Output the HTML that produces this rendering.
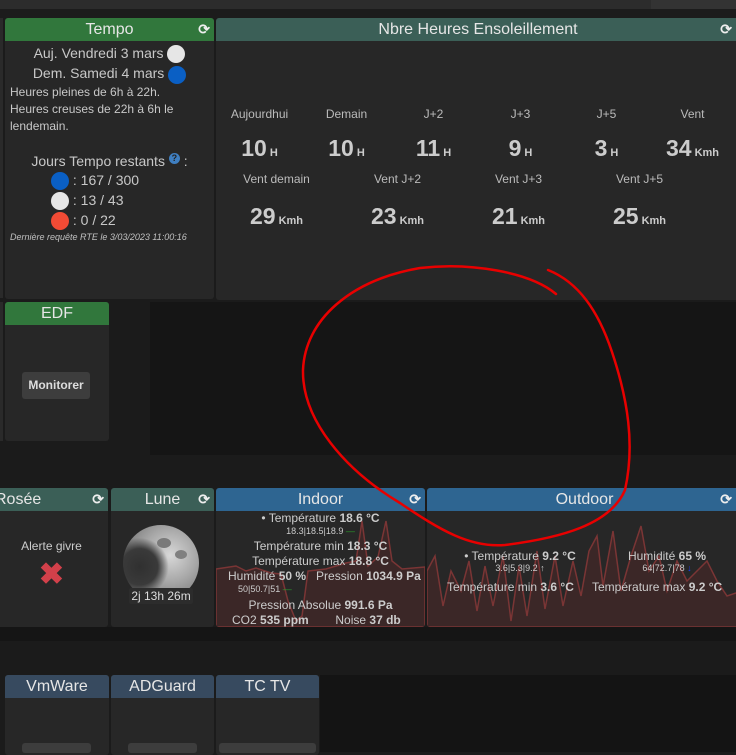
<!DOCTYPE html>
<html><head><meta charset="utf-8">
<style>
*{box-sizing:border-box;margin:0;padding:0}
body{width:736px;height:752px;overflow:hidden;background:#1b1b1b;font-family:"Liberation Sans",sans-serif;color:#ccc;position:relative}
.abs{position:absolute}
.card{position:absolute;background:#272727;border-radius:3px;overflow:hidden}
.hd{height:23px;line-height:23px;text-align:center;color:#e6e6e6;font-size:16px;position:relative}
.green{background:#31773c}
.teal{background:#3b5f57}
.blue{background:#2e6591}
.slate{background:#374a5f}
.ref{position:absolute;right:4px;top:0;font-size:14px;color:#eee;font-weight:bold}
.c{text-align:center}
.dot{display:inline-block;width:18px;height:18px;border-radius:50%;vertical-align:middle}
.lbl{font-size:12px;color:#bbb;text-align:center}
.big{font-size:23px;font-weight:bold;color:#ccc;text-align:center}
.big small{font-size:11px;font-weight:bold;margin-left:3px}
</style></head><body>
<div class="abs" style="left:0;top:0;width:651px;height:9px;background:#2c2c2c"></div>
<div class="abs" style="left:651px;top:0;width:85px;height:9px;background:#333"></div>
<div class="abs" style="left:0;top:9px;width:736px;height:9px;background:#1c1c1c"></div>
<div class="abs" style="left:0;top:18px;width:3px;height:280px;background:#2a2a2a"></div>

<!-- Tempo -->
<div class="card" style="left:5px;top:18px;width:209px;height:281px">
 <div class="hd green">Tempo<span class="ref">⟳</span></div>
 <div class="c" style="font-size:14px;margin-top:2px;line-height:20px;color:#c8c8c8">Auj. Vendredi 3 mars <span class="dot" style="background:#e6e6e6"></span><br>Dem. Samedi 4 mars <span class="dot" style="background:#0a5fc4"></span></div>
 <div style="font-size:12px;line-height:17px;padding-left:5px;color:#c8c8c8">Heures pleines de 6h à 22h.<br>Heures creuses de 22h à 6h le lendemain.</div>
 <div class="c" style="font-size:14px;margin-top:18px;color:#c8c8c8">Jours Tempo restants <span style="display:inline-block;width:11px;height:11px;border-radius:50%;background:#3f7fc1;color:#222;font-size:9px;line-height:11px;vertical-align:top;font-weight:bold">?</span> :</div>
 <div style="font-size:14px;line-height:20px;padding-left:46px;color:#c8c8c8;margin-top:1px">
  <div><span class="dot" style="background:#0a5fc4"></span> : 167 / 300</div>
  <div><span class="dot" style="background:#e6e6e6"></span> : 13 / 43</div>
  <div><span class="dot" style="background:#f24b35"></span> : 0 / 22</div>
 </div>
 <div style="font-size:9px;font-style:italic;padding-left:5px;margin-top:2px;color:#c0c0c0">Dernière requête RTE le 3/03/2023 11:00:16</div>
</div>

<!-- Nbre -->
<div class="card" style="left:216px;top:18px;width:524px;height:282px">
 <div class="hd teal">Nbre Heures Ensoleillement<span class="ref" style="right:8px">⟳</span></div>
 <div class="abs" style="left:0;top:89px;width:520px">
  <div style="display:flex">
   <div style="width:87px"><div class="lbl">Aujourdhui</div><div class="big" style="margin-top:14px">10<small>H</small></div></div>
   <div style="width:87px"><div class="lbl">Demain</div><div class="big" style="margin-top:14px">10<small>H</small></div></div>
   <div style="width:87px"><div class="lbl">J+2</div><div class="big" style="margin-top:14px">11<small>H</small></div></div>
   <div style="width:87px"><div class="lbl">J+3</div><div class="big" style="margin-top:14px">9<small>H</small></div></div>
   <div style="width:85px"><div class="lbl">J+5</div><div class="big" style="margin-top:14px">3<small>H</small></div></div>
   <div style="width:87px"><div class="lbl">Vent</div><div class="big" style="margin-top:14px">34<small>Kmh</small></div></div>
  </div>
  <div style="display:flex;margin-top:10px">
   <div style="width:121px"><div class="lbl">Vent demain</div><div class="big" style="margin-top:17px">29<small>Kmh</small></div></div>
   <div style="width:121px"><div class="lbl">Vent J+2</div><div class="big" style="margin-top:17px">23<small>Kmh</small></div></div>
   <div style="width:121px"><div class="lbl">Vent J+3</div><div class="big" style="margin-top:17px">21<small>Kmh</small></div></div>
   <div style="width:121px"><div class="lbl">Vent J+5</div><div class="big" style="margin-top:17px">25<small>Kmh</small></div></div>
  </div>
 </div>
</div>

<!-- middle background -->
<div class="abs" style="left:150px;top:302px;width:586px;height:153px;background:#151515"></div>
<div class="abs" style="left:0;top:302px;width:3px;height:139px;background:#2a2a2a"></div>
<div class="card" style="left:5px;top:302px;width:104px;height:139px">
 <div class="hd green">EDF</div>
 <div class="abs" style="left:17px;top:70px;width:68px;height:27px;background:#3d3d3d;border-radius:3px;color:#ddd;font-size:12px;font-weight:bold;text-align:center;line-height:27px">Monitorer</div>
</div>

<!-- row 3 -->
<div class="abs" style="left:0;top:627px;width:736px;height:14px;background:#151515"></div>
<div class="card" style="left:-5px;top:488px;width:113px;height:139px">
 <div class="hd teal" style="text-align:left;padding-left:0">Rosée<span class="ref">⟳</span></div>
 <div class="c" style="font-size:12px;color:#ccc;margin-top:28px">Alerte givre</div>
 <div class="c" style="font-size:30px;color:#d2404a;font-weight:bold;margin-top:4px">✖</div>
</div>
<div class="card" style="left:111px;top:488px;width:103px;height:139px">
 <div class="hd teal">Lune<span class="ref">⟳</span></div>
 <div class="abs" style="left:12px;top:37px;width:76px;height:76px;border-radius:50%;background:radial-gradient(circle at 22% 55%,#303030 0%,#3a3a3a 25%,transparent 40%),radial-gradient(circle at 62% 40%,#d8d8d8 0%,#a8a8a8 40%,#8d8d8d 60%,#5a5a5a 85%,#333 100%)"></div>
 <div class="abs" style="left:46px;top:50px;width:14px;height:10px;border-radius:50%;background:#7a7a7a"></div>
 <div class="abs" style="left:64px;top:62px;width:12px;height:9px;border-radius:50%;background:#808080"></div>
 <div class="abs" style="left:18px;top:100px;width:64px;height:16px;background:#2c2c2c;color:#ddd;font-size:12px;text-align:center;line-height:16px;border-radius:2px">2j 13h 26m</div>
</div>
<div class="card" style="left:216px;top:488px;width:209px;height:139px">
 <div class="hd blue">Indoor<span class="ref">⟳</span></div>
 <svg class="abs" style="left:0;top:23px" width="209" height="116"><path d="M0 58 L20 55 L30 60 L40 57 L55 62 L65 63 L72 90 L80 110 L86 105 L92 60 L110 58 L130 52 L140 50 L146 10 L152 55 L162 46 L170 10 L176 50 L186 58 L209 56 L209 116 L0 116Z" fill="#3b2727" stroke="#7a3535" stroke-width="1.5"/></svg>
 <div class="abs" style="left:0;top:23px;width:209px;font-size:12px;color:#ccc;line-height:15px">
  <div class="c">• Température <b>18.6 °C</b></div>
  <div class="c" style="font-size:9px;line-height:11px">18.3|18.5|18.9 <span style="color:#2a9a2a">—</span></div>
  <div class="c" style="margin-top:2px">Température min <b>18.3 °C</b></div>
  <div class="c">Température max <b>18.8 °C</b></div>
  <div style="padding-left:12px">Humidité <b>50 %</b> &nbsp;&nbsp;Pression <b>1034.9 Pa</b></div>
  <div style="font-size:9px;line-height:11px;padding-left:22px">50|50.7|51 <span style="color:#2a9a2a">—</span></div>
  <div class="c" style="margin-top:3px">Pression Absolue <b>991.6 Pa</b></div>
  <div style="padding-left:16px">CO2 <b>535 ppm</b> &nbsp;&nbsp;&nbsp;&nbsp;&nbsp;&nbsp;&nbsp;Noise <b>37 db</b></div>
 </div>
</div>
<div class="card" style="left:427px;top:488px;width:315px;height:139px">
 <div class="hd blue">Outdoor<span class="ref" style="right:10px">⟳</span></div>
 <svg class="abs" style="left:0;top:23px" width="315" height="116"><path d="M0 60 L8 45 L16 95 L24 60 L34 80 L42 50 L50 100 L58 55 L66 95 L76 45 L84 110 L92 55 L100 105 L110 40 L118 98 L128 45 L136 95 L146 50 L154 85 L162 40 L170 25 L176 75 L186 20 L194 80 L204 45 L214 15 L222 60 L232 45 L240 80 L250 50 L260 70 L270 60 L280 50 L290 70 L300 85 L315 80 L315 116 L0 116Z" fill="#3b2727" stroke="#7a3535" stroke-width="1.5"/></svg>
 <div class="abs" style="left:0;top:61px;width:315px;font-size:12px;color:#ccc">
  <div class="abs" style="left:28px;top:0;width:130px;text-align:center">• Température <b>9.2 °C</b><div style="font-size:9px">3.6|5.3|9.2 ↑</div></div>
  <div class="abs" style="left:180px;top:0;width:120px;text-align:center">Humidité <b>65 %</b><div style="font-size:9px">64|72.7|78 <span style="color:#1a3cff">↓</span></div></div>
  <div class="abs" style="left:20px;top:31px">Température min <b>3.6 °C</b></div>
  <div class="abs" style="left:165px;top:31px">Température max <b>9.2 °C</b></div>
 </div>
</div>

<!-- row 4 -->
<div class="abs" style="left:0;top:641px;width:736px;height:34px;background:#1b1b1b"></div>
<div class="abs" style="left:320px;top:675px;width:416px;height:77px;background:#141414"></div>
<div class="card" style="left:5px;top:675px;width:104px;height:80px"><div class="hd slate">VmWare</div><div class="abs" style="left:17px;top:68px;width:69px;height:10px;background:#3d3d3d;border-radius:3px"></div></div>
<div class="card" style="left:111px;top:675px;width:103px;height:80px"><div class="hd slate">ADGuard</div><div class="abs" style="left:17px;top:68px;width:69px;height:10px;background:#3d3d3d;border-radius:3px"></div></div>
<div class="card" style="left:216px;top:675px;width:103px;height:80px"><div class="hd slate">TC TV</div><div class="abs" style="left:3px;top:68px;width:97px;height:10px;background:#3d3d3d;border-radius:3px"></div></div>

<!-- red annotation -->
<svg class="abs" style="left:0;top:0" width="736" height="752"><path d="M556 294 C530 272 470 262 420 268 C350 280 305 320 303 370 C302 420 345 470 400 503 C440 530 470 548 505 545 C560 538 610 525 625 490 C635 445 628 400 612 352 C598 310 578 282 548 270" fill="none" stroke="#e80000" stroke-width="2.5" stroke-linecap="round"/></svg>
</body></html>
